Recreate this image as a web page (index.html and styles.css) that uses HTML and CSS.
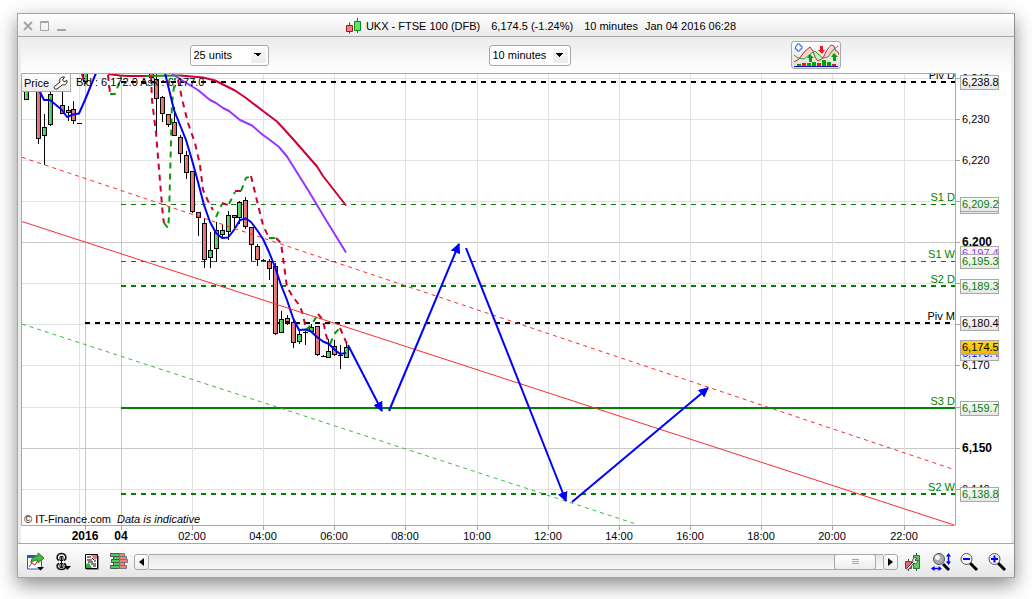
FILE: index.html
```html
<!DOCTYPE html>
<html lang="en">
<head>
<meta charset="UTF-8">
<meta name="viewport" content="width=device-width, initial-scale=1.0">
<title>UKX - FTSE 100 (DFB)</title>
<link rel="stylesheet" href="styles.css">
</head>
<body>
<div class="window">
  <header class="titlebar">
    <div class="controls">
      <button class="ctl" aria-label="Close"><svg width="10" height="10" viewBox="0 0 10 10"><path d="M1 1l8 8M9 1l-8 8" stroke="#a5a5a5" stroke-width="2"/></svg></button>
      <button class="ctl" aria-label="Maximize"><svg width="10" height="10" viewBox="0 0 10 10"><path d="M.5 .5h8v9h-8zM1 1.500h8" fill="none" stroke="#a5a5a5"/></svg></button>
      <button class="ctl" aria-label="Minimize"><svg width="10" height="10" viewBox="0 0 10 10"><path d="M0 9h9" stroke="#a5a5a5" stroke-width="2"/></svg></button>
    </div>
    <h1 class="title">
      <svg width="16" height="16" viewBox="0 0 16 16">
        <path d="M3.500 4.500v11" stroke="#9c1820"/><path d="M.5 7.500h6v6h-6z" fill="#f47c80" stroke="#9c1820"/>
        <path d="M11.500 0v15" stroke="#0a8a1c"/><path d="M8.500 3.500h6v9h-6z" fill="#66e466" stroke="#0a8a1c"/>
      </svg>
      <span>UKX - FTSE 100 (DFB)</span>
      <span class="quote">6,174.5 (-1.24%)</span>
      <span class="quote">10 minutes</span>
      <span>Jan 04 2016 06:28</span>
    </h1>
  </header>

  <div class="toolbar">
    <select class="slct units" aria-label="Number of units">
      <option>25 units</option>
      <option>50 units</option>
      <option>100 units</option>
    </select>
    <select class="slct period" aria-label="Time frame">
      <option>10 minutes</option>
      <option>15 minutes</option>
      <option>1 hour</option>
    </select>
    <button class="indicators" aria-label="Add indicator">
      <svg width="46" height="24" viewBox="0 0 46 24">
        <path d="M1 18l9-8 7-6 4 4 4 9 9-8 5-6 4 2 2 5-9 4-6 2-4-1-7-7-8 6z" fill="#ffd0d0"/>
        <path d="M20 8h4l6 7-4 4-4-2z" fill="#c3efbf"/>
        <path d="M1 19l5-3 6-8 5-4 3 4 2 6 3 4 5-3 4-8 4-5 3 1 1 4 3 2 1 3" fill="none" stroke="#c0303c"/>
        <path d="M1 12l4 3 6 1 6-5 5-3 3 3 5 4 5-1 4-6 6-5" fill="none" stroke="#30a030"/>
        <path d="M3 3h1V1h3v2h2v3h-2v2h-3v-2h-2z" fill="#fff" stroke="#3268c8"/>
        <path d="M17 11l-3 4h2v4h3v-4h2zM41 10l-3 4h2v4h3v-4h2z" fill="#00a400"/>
        <path d="M27 3h3v4h2l-3 4-4-4h2z" fill="#f01820"/>
        <path d="M4 21h4v2h-4zM14 20h4v3h-4zM19 19h4v4h-4zM29 17h4v6h-4zM34 19h4v4h-4z" fill="#00a400"/>
        <path d="M9 20h4v3h-4zM24 20h4v3h-4zM39 21h4v2h-4z" fill="#e81828"/>
        <path d="M1 23.500h44" stroke="#1010b0"/>
      </svg>
    </button>
  </div>

  <main class="chart">
    <svg class="plot" viewBox="21 73 990 470" role="img" aria-label="UKX 10 minute candles">
      <defs>
        <linearGradient id="tag" x2="0" y2="1"><stop stop-color="#fafafa"/><stop offset="1" stop-color="#e6e6e6"/></linearGradient>
        <linearGradient id="gold" x2="0" y2="1"><stop stop-color="#ffd820"/><stop offset="1" stop-color="#f0b400"/></linearGradient>
        <linearGradient id="up"><stop stop-color="#86ee86"/><stop offset="1" stop-color="#28b03c"/></linearGradient>
        <linearGradient id="down"><stop stop-color="#f48c8c"/><stop offset="1" stop-color="#d86060"/></linearGradient>
        <clipPath id="area"><path d="M21 73h935v453h-935z"/></clipPath>
        <marker id="head" markerUnits="userSpaceOnUse" markerWidth="10" markerHeight="10" refX="9" refY="5" orient="auto"><path d="M0 0l10 5-10 5z" fill="#00f"/></marker>
      </defs>
      <g id="grid"></g>
      <g clip-path="url(#area)">
        <g id="levels"></g>
        <g id="candles"></g>
        <g id="averages"></g>
        <!-- regression channel -->
        <path class="channel mid" d="M22 221.500L954 525"/>
        <path class="channel top" d="M22 157.300L954 469.500"/>
        <path class="channel low" d="M22 324L636 524"/>
        <!-- forecast -->
        <g class="forecast">
          <path d="M348 345L382 411"/>
          <path d="M389 411L459 244"/>
          <path d="M466 248L566 501"/>
          <path d="M572 502L708 388"/>
        </g>
        <text x="76" y="86">Bid : 6,172.0 Ask : 6,177.0</text>
        <text x="24" y="523">© IT-Finance.com</text>
        <text x="117" y="523" class="italic">Data is indicative</text>
      </g>
      <path class="frame" d="M21.500 525.500V73.500H955.500V525.500z"/>
      <g id="tags"></g>
    </svg>
    <button class="price">Price
      <svg width="15" height="14" viewBox="0 0 15 14"><path d="M1.500 10.500l5.500-4.500c-1-3 1-5.500 4.500-5l-2 3 1.500 1.800 3-1.300c.3 3.500-2 5-4.500 4.200l-5.500 4.300c-2 .8-3.500-1-2.500-2.500z" fill="#fff" stroke="#222"/></svg>
    </button>
  </main>

  <footer class="bottombar">
    <div class="tools">
      <button class="tool" aria-label="Export">
        <svg width="20" height="20" viewBox="0 0 20 20">
          <path d="M1.500 4h14v13h-14z" fill="#fff" stroke="#2458d0"/><path d="M1 4.500h9" stroke="#2458d0" stroke-width="3"/>
          <path d="M3 15l3-4 3 2 3-5" fill="none" stroke="#e02020"/>
          <path d="M5 11c0-5 3-7 7-7V1l6 5-6 5V8c-3 0-5 1-7 3z" fill="#48b848" stroke="#1c801c"/>
          <path d="M11 15h7l-3.500 3.500z"/>
        </svg>
      </button>
      <button class="tool" aria-label="Link windows">
        <svg width="20" height="20" viewBox="0 0 20 20">
          <path d="M5 8.500C2 7 2.500 1.500 7.500 1.500S13 7 10 8.500M5 11.500c-3 1.500-2.500 6 2.500 6s5.500-4.500 2.500-6" fill="none" stroke="#111" stroke-width="1.500"/>
          <path d="M6 8.500V4.500h3v4zM6 11.500v4h3v-4zM7.500 5v10" fill="none" stroke="#111"/>
          <path d="M10 14h7l-3.500 4z"/>
        </svg>
      </button>
      <button class="tool" aria-label="Orders">
        <svg width="20" height="20" viewBox="0 0 20 20">
          <path d="M16.500 4v13.500h-12" fill="none" stroke="#888"/>
          <path d="M3.500 2.500h12v14h-12z" fill="#fff" stroke="#000"/>
          <path d="M9 3h6v3l-2 2z" fill="#f07078"/><path d="M4 16v-4l3-1 3 5z" fill="#30b040"/>
          <path d="M5 5h4M5 8h5M12 9h2M6 10h5M9 12h5M11 14h3M10 6l2 2" stroke="#000"/>
        </svg>
      </button>
      <button class="tool" aria-label="Order book">
        <svg width="20" height="20" viewBox="0 0 20 20">
          <g fill="#48d058" stroke="#555"><path d="M.5 1.500h9v3h-9zM3.500 4.500h6v3h-6zM1.500 7.500h8v3h-8zM3.500 10.500h6v3h-6zM.5 13.500h9v3h-9z"/></g>
          <g fill="#f47c7c" stroke="#777"><path d="M9.500 1.500h5v3h-5zM9.500 4.500h7v3h-7zM9.500 7.500h8v3h-8zM9.500 10.500h5v3h-5zM9.500 13.500h7v3h-7z"/></g>
        </svg>
      </button>
    </div>
    <div class="scroll">
      <button class="step back" aria-label="Scroll left"><svg width="5" height="8" viewBox="0 0 5 8"><path d="M5 0v8L0 4z"/></svg></button>
      <input class="track" type="range" min="0" max="100" value="99" aria-label="Scroll chart">
      <button class="step next" aria-label="Scroll right"><svg width="5" height="8" viewBox="0 0 5 8"><path d="M0 0v8l5-4z"/></svg></button>
    </div>
    <div class="tools zooms">
      <button class="tool" aria-label="Chart settings">
        <svg width="20" height="20" viewBox="0 0 20 20">
          <path d="M5.500 7v12M13.500 1v18" stroke="#444"/>
          <path d="M2.500 9.500h6v7h-6z" fill="#f06068" stroke="#a03030"/><path d="M10.500 3.500h6v13h-6z" fill="#58d058" stroke="#208030"/>
          <path d="M4 16l6-6c-1-3 1-5 4-4l-2 2 1 1 2-1c0 3-2 4-4 3l-5 6c-2 1-3 0-2-1z" fill="#fff" stroke="#444"/>
        </svg>
      </button>
      <button class="tool" aria-label="Zoom to fit">
        <svg width="20" height="20" viewBox="0 0 20 20">
          <path d="M12 12l6 6" stroke="#000" stroke-width="3"/>
          <circle cx="8" cy="7" r="5.500" fill="#aaa" stroke="#555"/><circle cx="6.500" cy="5.500" r="2.500" fill="#f4f4f4"/>
          <path d="M17.500 3v8M1 16.500h8" stroke="#00f" stroke-width="1.500"/>
          <path d="M15 4.500l2.500-3.500L20 4.500zM15 9.500l2.500 3.500 2.500-3.500zM3.500 14v5L0 16.500zM7.500 14v5l3.500-2.500z" fill="#00f"/>
        </svg>
      </button>
      <button class="tool" aria-label="Zoom out">
        <svg width="20" height="20" viewBox="0 0 20 20">
          <path d="M11 11l7 7" stroke="#000" stroke-width="3"/><circle cx="7.500" cy="7" r="5.500" fill="#f4f4f4" stroke="#555"/><path d="M4 7h7" stroke="#00f" stroke-width="2"/>
        </svg>
      </button>
      <button class="tool" aria-label="Zoom in">
        <svg width="20" height="20" viewBox="0 0 20 20">
          <path d="M11 11l7 7" stroke="#000" stroke-width="3"/><circle cx="7.500" cy="7" r="5.500" fill="#f4f4f4" stroke="#555"/><path d="M4 7h7M7.500 3.500v7" stroke="#00f" stroke-width="2"/>
        </svg>
      </button>
    </div>
  </footer>
</div>
<script src="script.js"></script>
</body>
</html>
```

FILE: styles.css
```css
* {
  box-sizing: border-box;
}
body {
  min-height: 100vh;
  margin: 0;
  padding: 13px 17px;
  background: #fff;
  color: #000;
  font: 11px "Liberation Sans", Arial, sans-serif;
}
button {
  display: flex;
  align-items: center;
  justify-content: center;
  padding: 0;
  border: 0;
  background: none;
  font: inherit;
}
.window {
  padding: 0 3px;
  border: 1px solid #a4a4a4;
  border-right-color: #8e8e8e;
  background: #ececec;
  box-shadow: 0 7px 18px rgba(0, 0, 0, .45);
}

/* title bar */
.titlebar {
  display: flex;
  align-items: center;
  height: 23px;
  margin: 0 -3px;
  padding: 0 3px;
  border-bottom: 1px solid #a8a8a8;
  background: linear-gradient(#fff, #ebebeb);
}
.controls {
  display: flex;
  gap: 7px;
  width: 50px;
  padding: 2px 0 0 2px;
}
.title {
  display: flex;
  flex: 1;
  align-items: center;
  justify-content: center;
  gap: 7px;
  margin: 0;
  padding-top: 2px;
  font-size: 11px;
  font-weight: 400;
  white-space: nowrap;
}
.title svg {
  margin-right: -3px;
}
.quote {
  margin-left: 4px;
}

/* toolbar */
.toolbar {
  display: flex;
  align-items: center;
  justify-content: center;
  gap: 220px;
  height: 36px;
  padding-right: 2px;
  background: linear-gradient(#ebebeb, #fff);
}
.slct {
  height: 21px;
  padding: 0 3px;
  border: 1px solid #a8a8a8;
  border-radius: 3px;
  appearance: none;
  background:
    linear-gradient(to bottom right, #000 50%, transparent 50%) right 6px center / 4px 4px no-repeat,
    linear-gradient(to bottom left, #000 50%, transparent 50%) right 10px center / 4px 4px no-repeat,
    linear-gradient(#fafafa, #ebebeb) right 2px center / 15px 15px no-repeat,
    #fff;
  color: #000;
  font: inherit;
}
.units {
  width: 79px;
}
.period {
  width: 82px;
}
.indicators {
  width: 50px;
  height: 28px;
  border: 1px solid #aaa;
  border-radius: 3px;
  background: linear-gradient(#fff, #ddd);
}

/* chart */
.chart {
  position: relative;
  background: #fff;
}
.plot {
  display: block;
  width: 100%;
  height: auto;
}
.price {
  position: absolute;
  top: 1px;
  left: 1px;
  gap: 4px;
  height: 18px;
  padding: 0 2px;
  border: solid #a8a8a8;
  border-width: 0 1px 1px 0;
  background: linear-gradient(#fff, #ececec);
}
.italic {
  font-style: italic;
}
.big {
  font-size: 12px;
  font-weight: 700;
}
.center {
  text-anchor: middle;
}
.end {
  text-anchor: end;
}
.frame {
  fill: none;
  stroke: #a8a8a8;
}
.gridline {
  stroke: #e2e2e2;
}
.gridline.strong {
  stroke: #c8c8c8;
}
.tick {
  stroke: #a8a8a8;
}
.tag {
  fill: url(#tag);
  stroke: #a8a8a8;
}
.tag.last {
  fill: url(#gold);
}
.average {
  fill: none;
  stroke-width: 2;
  stroke-linejoin: round;
}
.dashed {
  stroke-dasharray: 6 5;
}
.level {
  stroke-width: 2;
  stroke-dasharray: 5 5;
}
.level.thin {
  stroke-width: 1;
}
.level.solid {
  stroke-dasharray: none;
}
.channel {
  fill: none;
  stroke: #ff2a2a;
}
.channel.top {
  stroke-dasharray: 4 4;
}
.channel.low {
  stroke: #3db83d;
  stroke-dasharray: 4 4;
}
.forecast path {
  stroke: #00f;
  stroke-width: 2;
  marker-end: url(#head);
}

/* bottom bar */
.bottombar {
  display: flex;
  align-items: center;
  height: 34px;
  margin: 0 -3px;
  padding: 2px 7px 0 8px;
  border-top: 1px solid #a8a8a8;
  background: linear-gradient(#fff, #e6e6e6);
}
.tools {
  display: flex;
  gap: 8px;
}
.zooms {
  padding-left: 5px;
}
.scroll {
  display: flex;
  flex: 1;
  margin-left: 4px;
}
.step {
  width: 15px;
  height: 16px;
  border: 1px solid #a8a8a8;
  border-radius: 3px;
  background: linear-gradient(#fff, #ececec);
}
.track {
  flex: 1;
  min-width: 0;
  height: 16px;
  margin: 0;
  border: solid #a8a8a8;
  border-width: 1px 0;
  appearance: none;
  background: linear-gradient(#e6e6e6, #f8f8f8);
}
.track::-webkit-slider-thumb {
  width: 42px;
  height: 16px;
  border: 1px solid #a8a8a8;
  border-radius: 3px;
  -webkit-appearance: none;
  background:
    repeating-linear-gradient(#aaa 0 1px, transparent 1px 2px) center / 7px 5px no-repeat,
    linear-gradient(#fff, #ececec);
}
```

FILE: script.js
```js
'use strict'

const GREEN = '#008000';
const CRIMSON = '#cc0033';
const LEAF = '#0a9a0a';

const add = (parent, name, attrs, text) => {
  const el = document.createElementNS('http://www.w3.org/2000/svg', name);
  for (const key in attrs) el.setAttribute(key, attrs[key]);
  if (text) el.textContent = text;
  document.getElementById(parent).appendChild(el);
};

// price axis: [y, label, bold]
const prices = [
  [78, '6,240'], [119, '6,230'], [160, '6,220'], [201, '6,210'], [242, '6,200', true], [283, '6,190'],
  [324, ''], [365, '6,170'], [407, ''], [448, '6,150', true], [489, '6,140']
];
prices.forEach(([y, label, bold]) => {
  add('grid', 'path', { class: bold ? 'gridline strong' : 'gridline', d: `M22 ${y + 0.5}H955` });
  add('grid', 'path', { class: 'tick', d: `M956 ${y + 0.5}h4` });
  if (label) add('grid', 'text', { class: bold ? 'big' : '', x: 962, y: y + 4 }, label);
});

// time axis: [x, label, bold]
const times = [
  [79, ''], [85, '2016', true], [121, '04', true], [192, '02:00'], [263, '04:00'], [334, '06:00'], [405, '08:00'],
  [477, '10:00'], [548, '12:00'], [619, '14:00'], [690, '16:00'], [761, '18:00'], [832, '20:00'], [904, '22:00']
];
times.forEach(([x, label, bold]) => {
  add('grid', 'path', { class: bold ? 'gridline strong' : 'gridline', d: `M${x + 0.5} 74V525` });
  if (!label) return;
  add('grid', 'path', { class: 'tick', d: `M${x + 0.5} 526v4` });
  add('grid', 'text', { class: bold ? 'big center' : 'center', x: x, y: 540 }, label);
});

// candles: [x, body top, body bottom, wick top, wick bottom, up]
const candles = [
  [26, 70, 99, 70, 99, 1], [38, 70, 138, 70, 144, 0], [44, 127, 135, 114, 165, 1], [50, 94, 124, 92, 126, 1],
  [62, 105, 113, 92, 114, 0], [68, 110, 112, 106, 121, 0], [73, 109, 120, 101, 124, 0], [79, 123, 123, 123, 124, 0],
  [85, 70, 81, 70, 84, 1], [151, 70, 77, 70, 79, 0], [156, 79, 98, 74, 132, 0], [162, 97, 113, 96, 122, 0],
  [168, 114, 124, 114, 127, 0], [174, 122, 135, 107, 136, 0], [180, 137, 153, 135, 163, 0], [186, 155, 172, 151, 179, 0],
  [192, 171, 211, 171, 213, 0], [198, 212, 217, 212, 236, 0], [204, 223, 259, 219, 268, 0], [210, 250, 257, 232, 268, 1],
  [216, 230, 248, 222, 262, 1], [222, 230, 234, 225, 238, 1], [228, 215, 231, 211, 240, 1], [234, 215, 217, 215, 229, 0],
  [239, 202, 217, 201, 224, 1], [245, 200, 226, 197, 229, 0], [251, 227, 244, 227, 261, 0], [257, 246, 259, 244, 266, 0],
  [263, 260, 260, 259, 261, 0], [269, 261, 268, 259, 280, 0], [275, 266, 333, 263, 335, 0], [281, 319, 332, 311, 333, 1],
  [287, 318, 321, 315, 325, 0], [293, 322, 342, 320, 348, 0], [299, 334, 341, 331, 344, 1], [305, 332, 332, 331, 345, 0],
  [311, 327, 331, 324, 333, 1], [317, 326, 354, 326, 356, 0], [323, 356, 356, 355, 357, 0], [328, 351, 357, 339, 358, 1],
  [334, 346, 354, 340, 356, 0], [340, 355, 355, 345, 369, 0], [346, 347, 357, 343, 358, 1]
];
candles.forEach(([x, top, bottom, high, low, up]) => {
  add('candles', 'path', { stroke: '#000', d: `M${x + 0.5} ${high}V${low}` });
  // open equals close: a bar only
  if (top === bottom) {
    add('candles', 'path', { stroke: '#000', d: `M${x - 2} ${top + 0.5}h5` });
    return;
  }
  add('candles', 'rect', {
    x: x - 1.5, y: top + 0.5, width: 4, height: bottom - top,
    fill: up ? 'url(#up)' : 'url(#down)', stroke: '#000'
  });
});

// averages and trailing stop: [colour, dashed, points]
const averages = [
  [CRIMSON, 0, '108,74 120,75.500 128,76 146,76'],
  [LEAF, 0, '146,76 180,75.500'],
  [CRIMSON, 0, '180,75.500 203,77.500 215,80.500 225,85.500 235,90.500 246,98 263,111 277,121.500 293,139 317,166.500 323,176 346,205.500'],
  ['#9933ff', 0, '172,74 180,79 193,87 198,90 210,100 216,103 223,108 229,111 240,120 252,125.500 263,135 270,140 279,147 287,156.500 308,190 326,220 346,252.500'],
  [CRIMSON, 1, '82,74 84,82'],
  [CRIMSON, 1, '108,75 110,93'],
  [LEAF, 1, '110,94 115,94 118,86 121,76'],
  [CRIMSON, 1, '151,76 152,100 156,133 163,217 164,223'],
  [LEAF, 1, '164,223 168,228 169,217 172,103 175,78'],
  [CRIMSON, 1, '178,80 183,103 188,123 195,143 200,165 203,190 208,201 213,210'],
  [LEAF, 1, '216,217 222,204'],
  [CRIMSON, 1, '222,203 228,205'],
  [LEAF, 1, '229,204 235,192'],
  [CRIMSON, 1, '235,191 241,191'],
  [LEAF, 1, '241,191 246,178 251,176'],
  [CRIMSON, 1, '251,176 258,205 263,225 269,238'],
  [LEAF, 1, '269,238 275,238'],
  [CRIMSON, 1, '276,238 281,243 284,265 287,287 293,297 300,306 303,315 306,329'],
  [LEAF, 1, '306,330 312,324 318,314'],
  [CRIMSON, 1, '318,314 323,320 326,335 329,344'],
  [LEAF, 1, '330,344 335,333 340,328'],
  [CRIMSON, 1, '340,328 347,344'],
  ['#0000ff', 0, '36,86 40,92 44,100 50,100 56,105 62,110 67,117 73,114.500 79,113.500 85,100 96,73'],
  ['#0000ff', 0, '165,73 174,110 186,140 192,160 198,182 204,205 210,222 216,233 222,238 228,237.500 234,230 240,220 246,218.500 251,222 257,230 263,239 269,252 275,267 281,285 287,300 293,318 299,330 306,329.500 311,331.500 317,337 323,341.500 329,344 334,349 340,354 346,353']
];
averages.forEach(([color, dashed, points]) => {
  add('averages', 'polyline', { class: dashed ? 'average dashed' : 'average', stroke: color, points: points });
});

// pivots: [start x, y, label, colour, style]
const levels = [
  [121, 82, 'Piv D', '#000', ''],
  [121, 204.5, 'S1 D', GREEN, 'thin'],
  [121, 261.5, 'S1 W', GREEN, 'thin'],
  [121, 286, 'S2 D', GREEN, ''],
  [85, 323, 'Piv M', '#000', ''],
  [121, 408, 'S3 D', GREEN, 'solid'],
  [121, 494, 'S2 W', GREEN, '']
];
levels.forEach(([x, y, label, color, style]) => {
  add('levels', 'path', { class: 'level ' + style, stroke: color, d: `M${x} ${y}H955` });
  add('levels', 'text', { class: 'end', x: 955, y: Math.floor(y) - 3, fill: color }, label);
});

// value tags on the price axis, back to front: [y, label, colour, style]
const tags = [
  [75, '6,238.8', '#000', ''],
  [199, '', CRIMSON, ''],
  [197, '6,209.2', GREEN, ''],
  [246, '6,197.4', '#9933ff', ''],
  [254, '6,195.3', GREEN, ''],
  [279, '6,189.3', GREEN, ''],
  [316, '6,180.4', '#000', ''],
  [346, '6,173.4', '#0000ff', ''],
  [340, '6,174.5', '#000', 'last'],
  [401, '6,159.7', GREEN, ''],
  [487, '6,138.8', GREEN, '']
];
tags.forEach(([y, label, color, style]) => {
  add('tags', 'rect', { class: 'tag ' + style, x: 960.5, y: y + 0.5, width: 38, height: 14 });
  if (label) add('tags', 'text', { x: 962, y: y + 11, fill: color }, label);
});
```
